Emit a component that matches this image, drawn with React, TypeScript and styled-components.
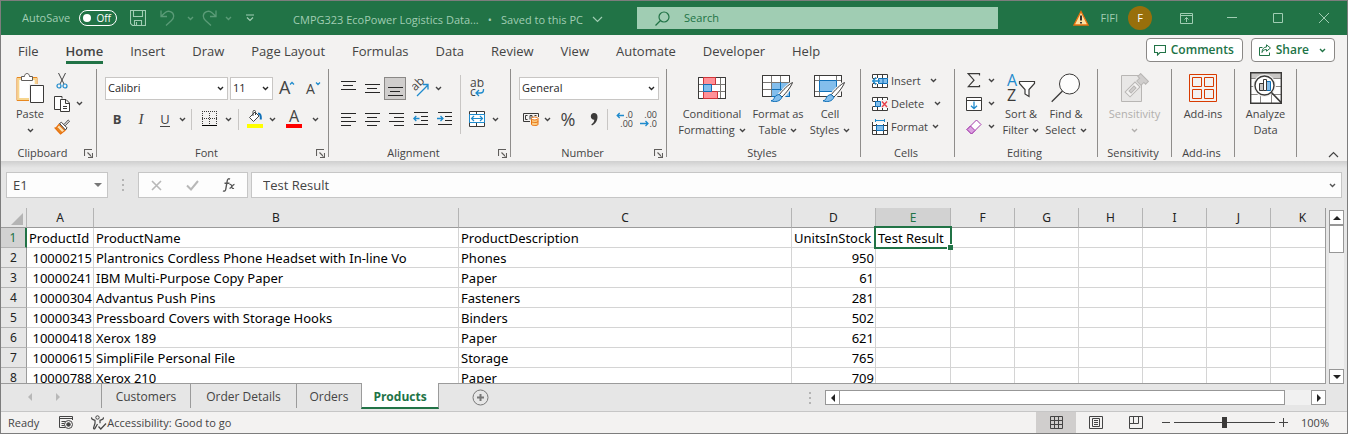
import React, { useState } from "react";
import styled, { createGlobalStyle, css } from "styled-components";

const INK = "#444444";
const DARK = "#3b3a39";
const GREEN = "#217346";
const MINT = "#a0cdb3";
const BLUE = "#1e8bcd";
const ui = `"Open Sans", "Noto Sans", sans-serif`;
const sheetFont = `"Noto Sans", "Open Sans", sans-serif`;

const GlobalStyle = createGlobalStyle`
  * { box-sizing: border-box; }
  body { margin: 0; background: #e6e6e6; }
  button, input, select { font: inherit; color: inherit; margin: 0; }
  button { border: 0; padding: 0; background: none; }
  svg { display: block; flex: none; }
`;

const Window = styled.div`
  display: flex;
  flex-direction: column;
  height: 100vh;
  border: 1px solid #7d7d7d;
  background: #e6e6e6;
  font: 11px/16px ${ui};
  color: ${INK};
  overflow: hidden;
`;

const Spacer = styled.span`
  flex: 1;
`;

/* ---------- title bar ---------- */

const TitleBar = styled.header`
  display: flex;
  align-items: center;
  flex: none;
  height: 34px;
  padding-left: 21px;
  background: ${GREEN};
  color: ${MINT};
`;

const Toggle = styled.button`
  display: flex;
  align-items: center;
  justify-content: space-between;
  width: 38px;
  height: 16px;
  margin: 0 10px 0 9px;
  padding: 0 5px 0 3px;
  border: 1px solid #fff;
  border-radius: 8px;
  color: #fff;
  font-size: 10px;
  line-height: 14px;
`;

const Knob = styled.span`
  width: 8px;
  height: 8px;
  border-radius: 50%;
  background: #fff;
`;

const BarButton = styled.button<{ $w: number; $dim?: boolean }>`
  display: flex;
  align-items: center;
  justify-content: center;
  flex: none;
  width: ${(p) => p.$w}px;
  height: 32px;
  opacity: ${(p) => (p.$dim ? 0.45 : 1)};
`;

const DocTitle = styled.button`
  display: flex;
  align-items: center;
  justify-content: space-between;
  flex: none;
  width: 310px;
  margin-left: 26px;
  padding-top: 3px;
`;

const SearchBox = styled.label`
  display: flex;
  align-items: center;
  flex: 1 1 200px;
  min-width: 120px;
  height: 22px;
  margin: 0 75px 0 34px;
  padding-left: 18px;
  gap: 14px;
  background: ${MINT};
  color: ${GREEN};
`;

const SearchInput = styled.input`
  flex: 1;
  min-width: 0;
  border: 0;
  padding: 0;
  outline: 0;
  background: transparent;
  &::placeholder { color: ${GREEN}; opacity: 1; }
`;

const Account = styled.button`
  display: flex;
  align-items: center;
  flex: none;
  gap: 10px;
  margin: 0 11px 0 12px;
`;

const Avatar = styled.span`
  width: 24px;
  height: 24px;
  border-radius: 50%;
  background: #986f0b;
  color: #fff;
  line-height: 24px;
  text-align: center;
`;

/* ---------- ribbon ---------- */

const TabRow = styled.nav`
  display: flex;
  align-items: center;
  flex: none;
  height: 29px;
  padding: 0 12px 0 17px;
  gap: 27px;
  background: #f3f2f1;
`;

const Tab = styled.button<{ $active?: boolean }>`
  height: 29px;
  padding: 5px 0 0;
  border-bottom: 3px solid ${(p) => (p.$active ? GREEN : "transparent")};
  font-size: 13px;
  font-weight: ${(p) => (p.$active ? 600 : 400)};
  white-space: nowrap;
`;

const TabActions = styled.div`
  display: flex;
  gap: 8px;
  margin-left: auto;
  padding-top: 1px;
`;

const ActionButton = styled.button`
  display: flex;
  align-items: center;
  height: 24px;
  padding: 0 8px 0 7px;
  gap: 5px;
  border: 1px solid #8a8886;
  border-radius: 4px;
  background: #fff;
  color: ${GREEN};
  font-size: 12px;
  font-weight: 600;
`;

const Ribbon = styled.div`
  display: flex;
  flex: none;
  height: 97px;
  background: #f3f2f1;
`;

const Rule = styled.div`
  flex: none;
  width: 1px;
  margin: 5px 0 4px;
  background: #8f8d8b;
`;

const Group = styled.section<{ $w: number }>`
  display: flex;
  flex-direction: column;
  flex: none;
  width: ${(p) => p.$w}px;
`;

const GroupBody = styled.div<{ $left?: number }>`
  display: flex;
  flex: 1;
  padding-left: ${(p) => p.$left ?? 0}px;
`;

const GroupFooter = styled.div`
  display: flex;
  align-items: center;
  height: 16px;
  padding-right: 3px;
`;

const GroupLabel = styled.span`
  flex: 1;
  text-align: center;
`;

const TwoRows = styled.div`
  display: flex;
  flex-direction: column;
  gap: 7px;
  padding-top: 12px;
`;

const ThreeRows = styled.div`
  display: flex;
  flex-direction: column;
  padding-top: 5px;
`;

const Row = styled.div<{ $h?: number; $gap?: number }>`
  display: flex;
  align-items: center;
  height: ${(p) => p.$h ?? 24}px;
  gap: ${(p) => p.$gap ?? 0}px;
`;

const Tool = styled.button<{ $w?: number; $on?: boolean }>`
  display: flex;
  align-items: center;
  justify-content: center;
  flex: none;
  width: ${(p) => p.$w ?? 24}px;
  height: 23px;
  ${(p) =>
    p.$on &&
    css`
      border: 1px solid #8a8886;
      background: #d0cecd;
    `}
`;

const Glyph = styled.span<{ $size?: number; $bold?: boolean; $italic?: boolean; $under?: boolean }>`
  font-size: ${(p) => p.$size ?? 13}px;
  font-weight: ${(p) => (p.$bold ? 700 : 400)};
  font-style: ${(p) => (p.$italic ? "italic" : "normal")};
  font-family: ${(p) => (p.$italic ? `"Liberation Serif", serif` : "inherit")};
  border-bottom: ${(p) => (p.$under ? `1px solid ${INK}` : "0")};
  line-height: 14px;
`;

const Separator = styled.div<{ $h?: number }>`
  flex: none;
  width: 1px;
  height: ${(p) => p.$h ?? 21}px;
  margin: 0 4px;
  background: #c8c6c4;
`;

const LargeTool = styled.button<{ $w: number; $off?: boolean }>`
  display: flex;
  flex-direction: column;
  align-items: center;
  flex: none;
  width: ${(p) => p.$w}px;
  padding-top: 6px;
  color: ${(p) => (p.$off ? "#b1afad" : INK)};
  white-space: nowrap;
`;

const LargeIcon = styled.span`
  display: flex;
  align-items: center;
  height: 36px;
`;

const Caption = styled.span`
  display: flex;
  align-items: center;
  height: 16px;
  gap: 4px;
`;

const LineTool = styled.button`
  display: flex;
  align-items: center;
  height: 23px;
  gap: 3px;
`;

const LineText = styled.span<{ $w: number }>`
  width: ${(p) => p.$w}px;
  text-align: left;
`;

const Combo = styled.span<{ $w: number }>`
  display: grid;
  align-items: center;
  width: ${(p) => p.$w}px;
  height: 23px;
  border: 1px solid #c8c6c4;
  background: #fff;
  color: #262626;
  & > * { grid-area: 1 / 1; }
  & > svg { justify-self: end; margin-right: 3px; pointer-events: none; }
`;

const Select = styled.select`
  appearance: none;
  width: 100%;
  height: 21px;
  padding: 0 14px 0 2px;
  border: 0;
  background: transparent;
`;

const CollapseCell = styled.div`
  display: flex;
  flex: 1;
  align-items: flex-end;
  justify-content: flex-end;
  padding: 0 8px 3px 0;
`;

/* ---------- formula bar ---------- */

const FormulaBar = styled.div`
  display: flex;
  flex: none;
  height: 47px;
  padding: 11px 5px 10px;
  background: linear-gradient(#cfcfcf, #e6e6e6 7px);
  font-size: 13px;
`;

const Field = styled.div<{ $w?: number }>`
  display: flex;
  align-items: center;
  flex: ${(p) => (p.$w ? `0 0 ${p.$w}px` : "1")};
  min-width: 0;
  height: 26px;
  padding: 0 5px;
  border: 1px solid #c6c6c6;
  background: #fdfdfd;
`;

const FieldInput = styled.input<{ $pad: number }>`
  flex: 1;
  min-width: 0;
  padding: 0 0 0 ${(p) => p.$pad}px;
  border: 0;
  outline: 0;
  background: transparent;
`;

const Dots = styled.div`
  display: flex;
  align-items: center;
  justify-content: center;
  width: 30px;
`;

const FxButtons = styled(Field)`
  justify-content: space-between;
  margin-right: 3px;
  padding: 0 11px 0 12px;
`;

/* ---------- sheet ---------- */

const SheetArea = styled.main`
  display: flex;
  flex: 1;
  min-height: 0;
`;

const GridClip = styled.div`
  flex: 1;
  min-width: 0;
  overflow: hidden;
  border-right: 1px solid #9b9b9b;
  border-bottom: 1px solid #9b9b9b;
`;

const Grid = styled.table`
  table-layout: fixed;
  width: 100%;
  border-spacing: 0;
  font: 12px/18px ${sheetFont};
  color: #000;
`;

const ColHead = styled.th<{ $on?: boolean }>`
  height: 20px;
  padding: 0;
  border-right: 1px solid #b4b4b4;
  border-bottom: 1px solid #9b9b9b;
  background: ${(p) => (p.$on ? "#d2d2d2" : "#e6e6e6")};
  color: ${(p) => (p.$on ? GREEN : "#222")};
  font-weight: 400;
`;

const Corner = styled(ColHead)`
  & > svg { margin: 3px 3px 0 auto; }
`;

const RowHead = styled.th<{ $on?: boolean }>`
  height: 20px;
  padding: 1px 0 0;
  border-right: ${(p) => (p.$on ? `2px solid ${GREEN}` : "1px solid #9b9b9b")};
  border-bottom: 1px solid #b4b4b4;
  background: ${(p) => (p.$on ? "#d2d2d2" : "#e6e6e6")};
  color: ${(p) => (p.$on ? GREEN : "#222")};
  font-weight: 400;
`;

const Cell = styled.td<{ $num?: boolean; $on?: boolean }>`
  height: 20px;
  padding: 1px 1px 0 2px;
  border-right: 1px solid #d4d4d4;
  border-bottom: 1px solid #d4d4d4;
  background: #fff;
  font-size: 13px;
  line-height: 18px;
  text-align: ${(p) => (p.$num ? "right" : "left")};
  white-space: nowrap;
  ${(p) =>
    p.$on &&
    css`
      position: relative;
      z-index: 1;
      &::before {
        content: "";
        position: absolute;
        inset: -2px;
        border: 2px solid ${GREEN};
      }
      &::after {
        content: "";
        position: absolute;
        right: -3px;
        bottom: -3px;
        width: 5px;
        height: 5px;
        border: solid #fff;
        border-width: 1px 0 0 1px;
        box-sizing: content-box;
        background: ${GREEN};
      }
    `}
`;

const VScroll = styled.div`
  display: flex;
  flex-direction: column;
  width: 15px;
  margin: 2px 3px 0 3px;
  background: #f1f1f1;
`;

const ScrollButton = styled.button`
  display: flex;
  align-items: center;
  justify-content: center;
  flex: none;
  width: 15px;
  height: 15px;
  border: 1px solid #979797;
  background: #fff;
`;

const VThumb = styled.div`
  height: 28px;
  margin-bottom: auto;
  border: 1px solid #979797;
  background: #fff;
`;

const SheetBar = styled.div`
  display: flex;
  flex: none;
  height: 28px;
  padding-right: 21px;
  border-bottom: 1px solid #c6c6c6;
  font-size: 12px;
`;

const SheetNav = styled.div`
  display: flex;
  align-items: center;
  justify-content: center;
  gap: 20px;
  width: 100px;
  padding: 0 14px 2px 0;
`;

const SheetTab = styled.button<{ $w: number; $active?: boolean }>`
  width: ${(p) => p.$w}px;
  height: 24px;
  padding-top: 2px;
  border-left: 1px solid #9b9b9b;
  ${(p) =>
    p.$active &&
    css`
      margin-top: -1px;
      height: 26px;
      padding-top: 4px;
      border-right: 1px solid #9b9b9b;
      border-bottom: 2px solid ${GREEN};
      background: #fff;
      color: ${GREEN};
      font-weight: 700;
    `}
`;

const AddSheet = styled.button`
  display: flex;
  align-items: center;
  margin-left: 33px;
`;

const HScroll = styled.div`
  display: flex;
  flex: 0 0 501px;
  height: 15px;
  margin-top: 6px;
  background: #f1f1f1;
`;

const HThumb = styled.div`
  flex: 1;
  margin: 0 26px 0 -1px;
  border: 1px solid #979797;
  background: #fff;
`;

/* ---------- status bar ---------- */

const StatusBar = styled.footer`
  display: flex;
  align-items: center;
  flex: none;
  height: 21px;
  padding: 0 17px 0 7px;
  background: #f3f2f1;
`;

const StatusItem = styled.button<{ $left: number }>`
  display: flex;
  align-items: center;
  margin-left: ${(p) => p.$left}px;
`;

const ViewButton = styled.button<{ $on?: boolean }>`
  display: flex;
  align-items: center;
  justify-content: center;
  width: 40px;
  height: 21px;
  background: ${(p) => (p.$on ? "#d0cecd" : "transparent")};
`;

const Zoom = styled.div`
  display: flex;
  align-items: center;
  gap: 4px;
  margin-left: 5px;
`;

const ZoomRange = styled.input`
  appearance: none;
  width: 101px;
  height: 13px;
  background: linear-gradient(${INK}, ${INK}) center / 100% 1px no-repeat;
  &::-webkit-slider-thumb {
    appearance: none;
    width: 5px;
    height: 11px;
    background: ${DARK};
  }
`;

const ZoomValue = styled.button`
  width: 30px;
  margin-left: 8px;
`;

/* ---------- drawings ---------- */

type ArtProps = { w: number; h: number; c?: string; children: React.ReactNode };
const Art = ({ w, h, c = INK, children }: ArtProps) => (
  <svg width={w} height={h} viewBox={`0 0 ${w} ${h}`} fill="none" stroke={c} strokeWidth="1" aria-hidden="true">
    {children}
  </svg>
);

type MarkProps = { x: number; y: number; size: number; c?: string; turn?: string; anchor?: "start" | "end"; children: string };
const Mark = ({ x, y, size, c = INK, turn, anchor = "start", children }: MarkProps) => (
  <text x={x} y={y} fontSize={size} fill={c} stroke="none" transform={turn} textAnchor={anchor} fontFamily={ui}>
    {children}
  </text>
);

const Chevron = ({ c = INK }: { c?: string }) => (
  <Art w={7} h={5} c={c}>
    <path d="M1 1l2.500 2.500L6 1" strokeWidth="1.4" />
  </Art>
);

const ThinChevron = ({ up }: { up?: boolean }) => (
  <Art w={11} h={7} c="currentColor">
    <path d={up ? "M1 6l4.500-4.500L10 6" : "M1 1l4.500 4.500L10 1"} strokeWidth="1.2" />
  </Art>
);

const Launcher = () => (
  <Art w={9} h={9} c="#605e5c">
    <path d="M.5 7V.5H8M3.500 3.500l4 4M8.500 4v4.500H4" strokeWidth="1.1" />
  </Art>
);

const SaveIcon = () => (
  <Art w={16} h={16} c={MINT}>
    <path d="M.5.5h15v15h-13l-2-2zM3.500.5v6h9v-6M4.500 15.500v-5h7v5M6.500 12v3" strokeWidth="1.1" />
  </Art>
);

const UndoIcon = ({ flip }: { flip?: boolean }) => (
  <svg width="15" height="16" viewBox="0 0 15 16" fill="none" stroke={MINT} strokeWidth="1.3" aria-hidden="true">
    <g transform={flip ? "matrix(-1 0 0 1 15 0)" : undefined}>
      <path d="M1 .5v6h6M1.200 6.300L5 2.800C8-.2 13.500 1.500 13.700 6c0 2-1 3.300-2.200 4.400L6 15.500" />
    </g>
  </svg>
);

const alignLines = (rows: [number, number, number][]) => (
  <Art w={15} h={15}>
    {rows.map(([y, a, b]) => (
      <path key={y} d={`M${a} ${y}.5H${b}`} stroke="#262626" shapeRendering="crispEdges" />
    ))}
  </Art>
);

const Brush = () => (
  <g>
    <path d="M31 1c-4 2-11 9-14 13l3 3c4-4 9-11 11-16z" fill="#fff" stroke="#f3f2f1" strokeWidth="3" />
    <path d="M30.500 1.500c-4 2-10 8-13 12l2.500 2.500c4-4 9-10 10.500-14.500z" fill="#fff" stroke="#3b3a39" />
    <path d="M17 13.500c-3 .5-4.500 2-5 4-.4 1.300-1.500 2-3 2.300 4 1.700 9.500.7 11-3.800z" fill="#83beec" stroke="#1070b8" />
  </g>
);

const CondFormatIcon = () => (
  <Art w={28} h={22} c="#3b3a39">
    <path d="M.5.500h27v21H.5z" fill="#fff" />
    <path d="M.5 7.500h27M.5 14.500h27M5.500 0v22M22.500 0v22" stroke="#797774" />
    <path d="M.5.500h27v21H.5z" />
    <path d="M5.500.500h12v7h-12zM5.500 14.500h14v7h-14z" fill="#ff9198" stroke="#d13438" />
    <path d="M5.500 7.500h8v7h-8z" fill="#83beec" stroke="#1070b8" />
  </Art>
);

const FormatTableIcon = () => (
  <Art w={32} h={28} c="#3b3a39">
    <path d="M.5 1.500h27v21H.5z" fill="#fff" />
    <path d="M9.500 8.500h18v14h-18z" fill="#83beec" stroke="#1070b8" />
    <path d="M.5 8.500h27M.5 15.500h9M9.500 1v21M18.500 1v7" stroke="#797774" />
    <path d="M18.500 8v14M9.500 15.500h18" stroke="#1070b8" />
    <path d="M27.500 9V1.500H.5v21h9" />
    <g transform="translate(0 7)"><Brush /></g>
  </Art>
);

const CellStylesIcon = () => (
  <Art w={32} h={28} c="#3b3a39">
    <path d="M.5 1.500h27v21H.5z" fill="#fff" />
    <path d="M.5 6.500h27M.5 17.500h27M5.500 1v21M22.500 1v21" stroke="#797774" />
    <path d="M27.500 9V1.500H.5v21h12" />
    <path d="M5.500 6.500h17v11h-17z" fill="#83beec" stroke="#1070b8" />
    <g transform="translate(0 7)"><Brush /></g>
  </Art>
);

const CellsIcon = ({ kind }: { kind: "insert" | "delete" | "format" }) => (
  <Art w={16} h={16} c="#3b3a39">
    {kind === "format" ? (
      <>
        <path d="M.5 3.500h15v12H.5z" fill="#fff" stroke="none" />
        <path d="M.5 3v12.500h15V3M.5 6.500h15M.5 11.500h15M4.500 5v10M11.500 5v10" />
        <path d="M4.500 6.500h7v5h-7z" fill="#83beec" stroke="#1070b8" />
        <path d="M3.500 1.500h9M3.500 0v3M12.500 0v3" stroke={BLUE} />
      </>
    ) : (
      <>
        <path d="M.5 1.500h15v13H.5z" fill="#fff" stroke="none" />
        <path d="M.5 5V1.500h15V5M.5 11v3.500h15V11M5.500 2v3M10.500 2v3M5.500 11v3M10.500 11v3M.5 5.500h4M.5 10.500h4" />
        {kind === "insert" ? (
          <>
            <path d="M6.500 5.500h9v5h-9zM11 5v6" fill="#83beec" stroke="#1070b8" />
            <path d="M8 8H1M4 4.500L.8 8 4 11.500" stroke={BLUE} strokeWidth="1.4" />
          </>
        ) : (
          <>
            <path d="M3.500 5.500h5v5h-5z" fill="#83beec" stroke="#1070b8" />
            <path d="M9 4h7v8H9z" fill="#f3f2f1" stroke="none" />
            <path d="M10 5.500l5 5.500M15 5.500L10 11" stroke="#e8404a" strokeWidth="1.4" />
          </>
        )}
      </>
    )}
  </Art>
);

const PasteIcon = () => (
  <Art w={28} h={30} c="#3b3a39">
    <path d="M1 4.500h20v23H1z" fill="#fff" stroke="#e8871e" />
    <path d="M2.500 6h17v20h-17z" fill="#fdf3e0" stroke="#f7d58e" strokeWidth="2" />
    <path d="M3.500 7h15v18h-15z" fill="#fff" stroke="none" />
    <path d="M5.500 7.500v-4h3c0-4 5-4 5 0h3v4z" fill="#fff" stroke="#605e5c" />
    <path d="M13 11h14v19H13z" fill="#f3f2f1" stroke="none" />
    <path d="M14.500 12.500h13v17h-13z" fill="#fff" />
  </Art>
);

const CutIcon = () => (
  <Art w={12} h={16}>
    <path d="M2.500 0l5.500 11M9.500 0L4 11" />
    <circle cx="3" cy="13" r="2" stroke={BLUE} strokeWidth="1.2" />
    <circle cx="9" cy="13" r="2" stroke={BLUE} strokeWidth="1.2" />
  </Art>
);

const CopyIcon = () => (
  <Art w={16} h={16} c="#3b3a39">
    <path d="M6 13.500H.5V.500h7.500v2" fill="#fff" />
    <path d="M6.500 3.500h5.500l3.500 3.500v8.500h-9zM11.500 3.500v4h4M9 10.500h4M9 12.500h4" fill="#fff" />
  </Art>
);

const PainterIcon = () => (
  <Art w={16} h={16}>
    <path d="M5 5.500L11 11.500 6.500 15 1 9 2.500 8.500z" fill="#fbe0b0" stroke="#e8710f" strokeWidth="1.2" />
    <path d="M1.500 9.500L6.500 14.500 8 13.500 3.500 8.800z" fill="#e8871e" stroke="#e8710f" />
    <path d="M5.500 4.500l2-1.200L13 8.800l-1.500 2.200zM10 5.500L14.300 1l1.200 1.200L11 6.800" fill="#fff" stroke="#3b3a39" />
  </Art>
);

const BordersIcon = () => (
  <Art w={15} h={16} c="#3b3a39">
    <path d="M0 .500h15M0 7.500h15M.5 2v12M7.500 2v12M14.500 2v12" strokeDasharray="1 1" shapeRendering="crispEdges" />
    <path d="M0 14.500h15" stroke="#000" shapeRendering="crispEdges" />
  </Art>
);

const FillIcon = () => (
  <Art w={16} h={18}>
    <path d="M2.500 7.500L8 2l4 4-5.500 5.500zM6 6V1.500C6 0 8.500 0 8.500 1.500V5" fill="#fff" />
    <path d="M11 3.500c2.500 0 3 2.500 2.800 6" stroke="#1070b8" strokeWidth="2" />
    <path d="M0 14h16v4H0z" fill="#ffff00" stroke="none" />
  </Art>
);

const FontColorIcon = () => (
  <Art w={16} h={18}>
    <Mark x={3} y={12} size={16}>A</Mark>
    <path d="M0 14h16v4H0z" fill="#ff0000" stroke="none" />
  </Art>
);

const SizeIcon = ({ grow }: { grow?: boolean }) => (
  <Art w={18} h={16}>
    {grow ? <Mark x={1} y={14} size={18}>A</Mark> : <Mark x={2} y={14} size={14}>A</Mark>}
    <path d={grow ? "M12 4.500l2-2 2 2" : "M12 2.500l2 2 2-2"} stroke={BLUE} strokeWidth="1.3" />
  </Art>
);

const OrientIcon = () => (
  <Art w={17} h={18}>
    <Mark x={1} y={11} size={12} turn="rotate(-45 4 9) ">ab</Mark>
    <path d="M5 17L15.500 6.500M11 5.500h5v5" stroke={BLUE} strokeWidth="1.3" />
  </Art>
);

const WrapIcon = () => (
  <Art w={16} h={18}>
    <Mark x={1} y={8} size={12}>ab</Mark>
    <Mark x={1} y={17} size={12}>c</Mark>
    <path d="M14.500 10v1c0 2-1 3-3 3H7.500M10 11l-3 3 3 3" stroke={BLUE} strokeWidth="1.3" />
  </Art>
);

const IndentIcon = ({ right }: { right?: boolean }) => (
  <Art w={15} h={14}>
    <path d="M1 .500h14M8 4.500h7M8 8.500h7M1 12.500h14" stroke="#262626" shapeRendering="crispEdges" />
    <path d={right ? "M0 6.500h6M3.500 4l2.500 2.500L3.500 9" : "M6.500 6.500H.8M3.300 4L.8 6.500 3.300 9"} stroke={BLUE} strokeWidth="1.3" />
  </Art>
);

const MergeIcon = () => (
  <Art w={16} h={16} c="#3b3a39">
    <path d="M.5.500h15v15H.5zM7.500 0v4M7.500 12v4" fill="#fff" />
    <path d="M.5 3.500h15v8H.5z" fill="#fff" stroke={BLUE} />
    <path d="M2.500 7.500h11M5 5L2.500 7.500 5 10M11 5l2.500 2.500L11 10" stroke={BLUE} strokeWidth="1.2" />
  </Art>
);

const CurrencyIcon = () => (
  <Art w={16} h={14} c="#3b3a39">
    <path d="M7 9.500H.5v-8h15V5" />
    <path d="M4.500 3.500h-2v4h2M7 7.500v-4h2v4M11.500 3.500h2" />
    <path d="M8.500 6.500v6c0 1.300 6.500 1.300 6.500 0v-6" fill="#fbd08a" stroke="#e8710f" />
    <ellipse cx="11.700" cy="6.500" rx="3.200" ry="1.500" fill="#fff" stroke="#e8710f" />
    <path d="M8.500 9.500c0 1.300 6.500 1.300 6.500 0" stroke="#e8710f" />
  </Art>
);

const DecimalIcon = ({ less }: { less?: boolean }) => (
  <Art w={17} h={17}>
    <Mark x={17} y={7} size={9} anchor="end">{less ? ".00" : ".0"}</Mark>
    <Mark x={17} y={16} size={9} anchor="end">{less ? ".0" : ".00"}</Mark>
    <path d={less ? "M0 12.500h8M5.500 10L8 12.500 5.500 15" : "M8 4.500H1.200M3.700 2L1.200 4.500 3.700 7"} stroke={BLUE} strokeWidth="1.3" />
  </Art>
);

const SumIcon = () => (
  <Art w={14} h={15} c="#3b3a39">
    <path d="M12.500 2.500V.7H1.200L7 7.200l-5.800 6.500h11.300V12" strokeWidth="1.2" />
  </Art>
);

const FillDownIcon = () => (
  <Art w={16} h={14} c="#3b3a39">
    <path d="M.5.500h15v13H.5zM.5 3.500h15" fill="#fff" />
    <path d="M8 4.500v7M5 8.700l3 3 3-3" stroke={BLUE} strokeWidth="1.3" />
  </Art>
);

const EraserIcon = () => (
  <Art w={16} h={16} c="#a33bac">
    <path d="M1 10.500L10.500 1 15 5.500 5.500 15z" fill="#fff" />
    <path d="M1 10.500L4.500 7 9 11.500 5.500 15z" fill="#dba0e0" />
  </Art>
);

const SortIcon = () => (
  <Art w={30} h={30} c="#3b3a39">
    <Mark x={1} y={13} size={16} c={BLUE}>A</Mark>
    <Mark x={1} y={28} size={16} c={DARK}>Z</Mark>
    <path d="M13.500 8.500h15v2l-5.500 6v7l-4-2.500v-4.500l-5.500-6z" fill="#fff" strokeWidth="1.2" />
  </Art>
);

const FindIcon = () => (
  <Art w={30} h={30} c="#3b3a39">
    <circle cx="18.500" cy="11" r="10" fill="#fdfdfd" />
    <path d="M11.500 18L.7 28.800" strokeWidth="1.3" />
  </Art>
);

const SensitivityIcon = () => (
  <Art w={28} h={30} c="#b8b6b4">
    <path d="M.5 2.500h20v26H.5z" fill="#e8e7e6" />
    <g transform="rotate(-45 14 14)">
      <rect x="3.500" y="10.500" width="14" height="7" fill="#f3f2f1" />
      <path d="M7 12.500h7v3H7z" fill="#d0cecd" />
      <path d="M19.500 11h4V8.500h4v11h-4V17h-4z" fill="#d0cecd" />
    </g>
  </Art>
);

const AddinsIcon = () => (
  <Art w={28} h={28} c="#d83b01">
    <path d="M.5.500h27v27H.5zM3.500 3.500h9v9h-9zM15.500 3.500h9v9h-9zM3.500 15.500h9v9h-9zM15.500 15.500h9v9h-9z" />
  </Art>
);

const AnalyzeIcon = () => (
  <Art w={32} h={32} c="#3b3a39">
    <path d="M.5.500h31v31H.5z" fill="#fff" />
    <path d="M1 1h30v5H1z" fill="#c8c6c4" stroke="none" />
    <path d="M1 6.500h30M1 14.500h30M1 22.500h30M10.500 22v9M21.500 22v9" stroke="#8a8886" />
    <path d="M.7.700h30.600v30.600H.7z" strokeWidth="1.4" />
    <circle cx="14.500" cy="13.500" r="11" fill="#f3f2f1" stroke="#f3f2f1" />
    <circle cx="14.500" cy="13.500" r="9.500" fill="#fff" strokeWidth="1.400" />
    <path d="M21.500 20.500l10 10.500" strokeWidth="1.600" />
    <path d="M9.500 11.500h4v7h-4z" fill="#c8c6c4" />
    <path d="M16.500 9.500h4v9h-4z" fill="#83beec" stroke="#1070b8" />
    <path d="M13.500 7.500h3v11h-3z" fill="#fff" />
  </Art>
);

const Triangle = ({ dir, c = "#222" }: { dir: "up" | "down" | "left" | "right"; c?: string }) => {
  const d = { up: "M0 6l4-4 4 4z", down: "M0 2l4 4 4-4z", left: "M6 0L2 4l4 4z", right: "M2 0l4 4-4 4z" }[dir];
  return (
    <Art w={8} h={8} c="none">
      <path d={d} fill={c} />
    </Art>
  );
};

const DotColumn = () => (
  <Art w={2} h={12} c="none">
    <path d="M0 0h2v2H0zM0 5h2v2H0zM0 10h2v2H0z" fill="#b4b4b4" />
  </Art>
);

/* ---------- data ---------- */

const tabs = ["File", "Home", "Insert", "Draw", "Page Layout", "Formulas", "Data", "Review", "View", "Automate", "Developer", "Help"];
const columns: [string, number][] = [
  ["A", 67], ["B", 365], ["C", 333], ["D", 84], ["E", 75],
  ["F", 64], ["G", 64], ["H", 64], ["I", 64], ["J", 64], ["K", 64],
];
const rows = [
  ["ProductId", "ProductName", "ProductDescription", "UnitsInStock", "Test Result"],
  ["10000215", "Plantronics Cordless Phone Headset with In-line Vo", "Phones", "950"],
  ["10000241", "IBM Multi-Purpose Copy Paper", "Paper", "61"],
  ["10000304", "Advantus Push Pins", "Fasteners", "281"],
  ["10000343", "Pressboard Covers with Storage Hooks", "Binders", "502"],
  ["10000418", "Xerox 189", "Paper", "621"],
  ["10000615", "SimpliFile Personal File", "Storage", "765"],
  ["10000788", "Xerox 210", "Paper", "709"],
];

const Footer = ({ label, launch }: { label: string; launch?: boolean }) => (
  <GroupFooter>
    <GroupLabel>{label}</GroupLabel>
    {launch && (
      <button aria-label={`${label} settings`}>
        <Launcher />
      </button>
    )}
  </GroupFooter>
);

const Drop = ({ label, w = 10 }: { label: string; w?: number }) => (
  <Tool $w={w} aria-label={label}>
    <Chevron />
  </Tool>
);

export default function App() {
  const [zoom, setZoom] = useState(50);
  return (
    <>
      <GlobalStyle />
      <Window>
        <TitleBar>
          <span>AutoSave</span>
          <Toggle role="switch" aria-checked={false} aria-label="AutoSave">
            <Knob />
            Off
          </Toggle>
          <BarButton $w={22} aria-label="Save"><SaveIcon /></BarButton>
          <BarButton $w={36} $dim aria-label="Undo"><UndoIcon /></BarButton>
          <BarButton $w={10} $dim aria-label="Undo list"><Chevron c={MINT} /></BarButton>
          <BarButton $w={28} $dim aria-label="Redo"><UndoIcon flip /></BarButton>
          <BarButton $w={10} $dim aria-label="Redo list"><Chevron c={MINT} /></BarButton>
          <BarButton $w={34} aria-label="Customize toolbar">
            <Art w={8} h={8} c={MINT}><path d="M0 1h8M1 3.500l3 3 3-3" strokeWidth="1.2" /></Art>
          </BarButton>
          <DocTitle>
            <span>CMPG323 EcoPower Logistics Data...</span>
            <span>•</span>
            <span>Saved to this PC</span>
            <ThinChevron />
          </DocTitle>
          <SearchBox>
            <Art w={15} h={15} c={GREEN}>
              <circle cx="9" cy="6" r="5" strokeWidth="1.2" />
              <path d="M5.500 9.500L.5 14.500" strokeWidth="1.2" />
            </Art>
            <SearchInput placeholder="Search" aria-label="Search" />
          </SearchBox>
          <Art w={16} h={16} c="#e8710f">
            <path d="M8 1.500L15 15H1z" fill="#fde1a0" strokeWidth="1.3" />
            <path d="M8 5.500v5M8 12v1.500" stroke="#222" strokeWidth="1.800" />
          </Art>
          <Account>
            FIFI
            <Avatar>F</Avatar>
          </Account>
          <BarButton $w={46} aria-label="Ribbon display options">
            <Art w={13} h={11} c={MINT}>
              <path d="M.5.500h12v10H.5zM.5 2.500h12M6.500 9V4.500M4.500 6.500l2-2 2 2" />
            </Art>
          </BarButton>
          <BarButton $w={46} aria-label="Minimize"><Art w={10} h={10} c={MINT}><path d="M0 4.500h10" /></Art></BarButton>
          <BarButton $w={46} aria-label="Maximize"><Art w={10} h={10} c={MINT}><path d="M.5.500h9v9h-9z" /></Art></BarButton>
          <BarButton $w={46} aria-label="Close"><Art w={10} h={10} c={MINT}><path d="M0 0l10 10M10 0L0 10" /></Art></BarButton>
        </TitleBar>

        <TabRow>
          {tabs.map((t) => (
            <Tab key={t} $active={t === "Home"}>{t}</Tab>
          ))}
          <TabActions>
            <ActionButton>
              <Art w={12} h={11} c={GREEN}><path d="M.5.500h11v7H6l-2.500 2.500V7.500h-3z" strokeWidth="1.1" /></Art>
              Comments
            </ActionButton>
            <ActionButton>
              <Art w={12} h={12} c={GREEN}>
                <path d="M3.500 3.500h-3v8h10V8.500M7.500.8l4 3.200-4 3.200V5.500C5 5.500 4 6.500 3 8.500c0-3.500 2-5.500 4.500-5.500z" />
              </Art>
              Share
              <span />
              <Chevron c={GREEN} />
            </ActionButton>
          </TabActions>
        </TabRow>

        <Ribbon>
          <Group $w={95}>
            <GroupBody $left={9}>
              <LargeTool $w={40}>
                <LargeIcon><PasteIcon /></LargeIcon>
                <Caption>Paste</Caption>
                <Caption><Chevron /></Caption>
              </LargeTool>
              <ThreeRows>
                <Row $h={23}><Tool aria-label="Cut"><CutIcon /></Tool></Row>
                <Row $h={23}><Tool aria-label="Copy"><CopyIcon /></Tool><Drop label="Copy options" /></Row>
                <Row $h={23}><Tool aria-label="Format painter"><PainterIcon /></Tool></Row>
              </ThreeRows>
            </GroupBody>
            <Footer label="Clipboard" launch />
          </Group>
          <Rule />

          <Group $w={231}>
            <GroupBody $left={8}>
              <TwoRows>
                <Row $gap={2}>
                  <Combo $w={123}>
                    <Select aria-label="Font"><option>Calibri</option></Select>
                    <Chevron c="#262626" />
                  </Combo>
                  <Combo $w={43}>
                    <Select aria-label="Font size"><option>11</option></Select>
                    <Chevron c="#262626" />
                  </Combo>
                  <Tool aria-label="Increase font size"><SizeIcon grow /></Tool>
                  <Tool aria-label="Decrease font size"><SizeIcon /></Tool>
                </Row>
                <Row>
                  <Tool aria-label="Bold"><Glyph $bold>B</Glyph></Tool>
                  <Tool aria-label="Italic"><Glyph $italic $size={15}>I</Glyph></Tool>
                  <Tool aria-label="Underline"><Glyph $under>U</Glyph></Tool>
                  <Drop label="Underline style" />
                  <Separator />
                  <Tool $w={26} aria-label="Borders"><BordersIcon /></Tool>
                  <Drop label="Border style" w={12} />
                  <Separator />
                  <Tool aria-label="Fill color"><FillIcon /></Tool>
                  <Drop label="Fill colors" />
                  <Tool $w={34} aria-label="Font color"><FontColorIcon /></Tool>
                  <Drop label="Font colors" w={8} />
                </Row>
              </TwoRows>
            </GroupBody>
            <Footer label="Font" launch />
          </Group>
          <Rule />

          <Group $w={181}>
            <GroupBody $left={7}>
              <TwoRows>
                <Row>
                  <Tool aria-label="Top align">{alignLines([[0, 0, 15], [4, 2, 12], [8, 0, 15]])}</Tool>
                  <Tool aria-label="Middle align">{alignLines([[3, 0, 15], [7, 2, 12], [11, 0, 15]])}</Tool>
                  <Tool $w={22} $on aria-label="Bottom align">{alignLines([[6, 0, 15], [10, 2, 12], [14, 0, 15]])}</Tool>
                  <Tool $w={28} aria-label="Orientation"><OrientIcon /></Tool>
                  <Drop label="Orientation options" w={8} />
                </Row>
                <Row>
                  <Tool aria-label="Align left">{alignLines([[1, 0, 15], [5, 0, 10], [9, 0, 15], [13, 0, 10]])}</Tool>
                  <Tool aria-label="Center">{alignLines([[1, 0, 15], [5, 2, 12], [9, 0, 15], [13, 2, 12]])}</Tool>
                  <Tool aria-label="Align right">{alignLines([[1, 0, 15], [5, 5, 15], [9, 0, 15], [13, 5, 15]])}</Tool>
                  <Tool aria-label="Decrease indent"><IndentIcon /></Tool>
                  <Tool aria-label="Increase indent"><IndentIcon right /></Tool>
                </Row>
              </TwoRows>
              <Row $h={80}><Separator $h={59} /></Row>
              <TwoRows>
                <Row><Tool aria-label="Wrap text"><WrapIcon /></Tool></Row>
                <Row><Tool aria-label="Merge and center"><MergeIcon /></Tool><Drop label="Merge options" w={12} /></Row>
              </TwoRows>
            </GroupBody>
            <Footer label="Alignment" launch />
          </Group>
          <Rule />

          <Group $w={155}>
            <GroupBody $left={8}>
              <TwoRows>
                <Row>
                  <Combo $w={140}>
                    <Select aria-label="Number format"><option>General</option></Select>
                    <Chevron c="#262626" />
                  </Combo>
                </Row>
                <Row>
                  <Tool aria-label="Accounting format"><CurrencyIcon /></Tool>
                  <Drop label="Accounting formats" w={8} />
                  <Tool $w={34} aria-label="Percent"><Glyph $size={18}>%</Glyph></Tool>
                  <Tool $w={18} aria-label="Comma">
                    <Art w={8} h={14} c="none">
                      <path d="M4 1c2.200 0 3.500 1.500 3.500 4C7.500 8.500 5.500 12 2 13.500L1.300 12.500C3.500 11 4.200 9.500 4.300 7.800 2.500 8 .8 6.500.8 4.500.8 2.500 2.200 1 4 1z" fill="#3b3a39" />
                    </Art>
                  </Tool>
                  <Separator />
                  <Tool aria-label="Increase decimal"><DecimalIcon /></Tool>
                  <Tool aria-label="Decrease decimal"><DecimalIcon less /></Tool>
                </Row>
              </TwoRows>
            </GroupBody>
            <Footer label="Number" launch />
          </Group>
          <Rule />

          <Group $w={193}>
            <GroupBody $left={8}>
              <LargeTool $w={74}>
                <LargeIcon><CondFormatIcon /></LargeIcon>
                <Caption>Conditional</Caption>
                <Caption>Formatting<Chevron /></Caption>
              </LargeTool>
              <LargeTool $w={58}>
                <LargeIcon><FormatTableIcon /></LargeIcon>
                <Caption>Format as</Caption>
                <Caption>Table<Chevron /></Caption>
              </LargeTool>
              <LargeTool $w={46}>
                <LargeIcon><CellStylesIcon /></LargeIcon>
                <Caption>Cell</Caption>
                <Caption>Styles<Chevron /></Caption>
              </LargeTool>
            </GroupBody>
            <Footer label="Styles" />
          </Group>
          <Rule />

          <Group $w={93}>
            <GroupBody $left={11}>
              <ThreeRows>
                <LineTool><CellsIcon kind="insert" /><LineText $w={36}>Insert</LineText><Chevron /></LineTool>
                <LineTool><CellsIcon kind="delete" /><LineText $w={40}>Delete</LineText><Chevron /></LineTool>
                <LineTool><CellsIcon kind="format" /><LineText $w={38}>Format</LineText><Chevron /></LineTool>
              </ThreeRows>
            </GroupBody>
            <Footer label="Cells" />
          </Group>
          <Rule />

          <Group $w={142}>
            <GroupBody $left={7}>
              <ThreeRows>
                <Row $h={23}><Tool aria-label="AutoSum"><SumIcon /></Tool><Drop label="AutoSum options" /></Row>
                <Row $h={23}><Tool aria-label="Fill"><FillDownIcon /></Tool><Drop label="Fill options" /></Row>
                <Row $h={23}><Tool aria-label="Clear"><EraserIcon /></Tool><Drop label="Clear options" /></Row>
              </ThreeRows>
              <LargeTool $w={50}>
                <LargeIcon><SortIcon /></LargeIcon>
                <Caption>Sort &amp;</Caption>
                <Caption>Filter<Chevron /></Caption>
              </LargeTool>
              <LargeTool $w={40}>
                <LargeIcon><FindIcon /></LargeIcon>
                <Caption>Find &amp;</Caption>
                <Caption>Select<Chevron /></Caption>
              </LargeTool>
            </GroupBody>
            <Footer label="Editing" />
          </Group>
          <Rule />

          <Group $w={73}>
            <GroupBody>
              <LargeTool $w={73} $off disabled>
                <LargeIcon><SensitivityIcon /></LargeIcon>
                <Caption>Sensitivity</Caption>
                <Caption><Chevron c="#b1afad" /></Caption>
              </LargeTool>
            </GroupBody>
            <Footer label="Sensitivity" />
          </Group>
          <Rule />

          <Group $w={62}>
            <GroupBody>
              <LargeTool $w={62}>
                <LargeIcon><AddinsIcon /></LargeIcon>
                <Caption>Add-ins</Caption>
              </LargeTool>
            </GroupBody>
            <Footer label="Add-ins" />
          </Group>
          <Rule />

          <Group $w={61}>
            <GroupBody>
              <LargeTool $w={61}>
                <LargeIcon><AnalyzeIcon /></LargeIcon>
                <Caption>Analyze</Caption>
                <Caption>Data</Caption>
              </LargeTool>
            </GroupBody>
          </Group>
          <Rule />
          <CollapseCell>
            <button aria-label="Collapse ribbon"><ThinChevron up /></button>
          </CollapseCell>
        </Ribbon>

        <FormulaBar>
          <Field $w={102}>
            <FieldInput $pad={1} aria-label="Name box" defaultValue="E1" />
            <Triangle dir="down" c="#777" />
          </Field>
          <Dots><DotColumn /></Dots>
          <FxButtons $w={110}>
            <button aria-label="Cancel">
              <Art w={11} h={11} c="#b8b8b8"><path d="M1 1l9 9M10 1l-9 9" strokeWidth="1.6" /></Art>
            </button>
            <button aria-label="Enter">
              <Art w={13} h={11} c="#b8b8b8"><path d="M1 5.500l4 4L12 1" strokeWidth="2" /></Art>
            </button>
            <button aria-label="Insert function">
              <Art w={14} h={14} c="#555">
                <path d="M8 1.200C6.500.3 5.500 1 5.200 3L3.800 11c-.3 2-1.300 2.500-2.800 1.800M2.500 5.200h5" strokeWidth="1.400" />
                <path d="M7.500 6.500c1.500-.5 1.800 0 2.200 2s.8 2.300 2.300 1.700M12.500 6.300c-2 0-3 4-5 4" strokeWidth="1.200" />
              </Art>
            </button>
          </FxButtons>
          <Field>
            <FieldInput $pad={6} aria-label="Formula" defaultValue="Test Result" />
            <Chevron c="#555" />
          </Field>
        </FormulaBar>

        <SheetArea>
          <GridClip>
            <Grid>
              <colgroup>
                <col style={{ width: 26 }} />
                {columns.map(([name, w]) => <col key={name} style={{ width: w }} />)}
                <col />
              </colgroup>
              <thead>
                <tr>
                  <Corner aria-label="Select all">
                    <Art w={12} h={12} c="none"><path d="M12 0v12H0z" fill="#b4b4b4" /></Art>
                  </Corner>
                  {columns.map(([name]) => (
                    <ColHead key={name} scope="col" $on={name === "E"}>{name}</ColHead>
                  ))}
                  <ColHead />
                </tr>
              </thead>
              <tbody>
                {rows.map((r, i) => (
                  <tr key={r[0]}>
                    <RowHead scope="row" $on={i === 0}>{i + 1}</RowHead>
                    {columns.map(([name], c) => (
                      <Cell key={name} $num={i > 0 && (c === 0 || c === 3)} $on={i === 0 && c === 4}>
                        {r[c]}
                      </Cell>
                    ))}
                    <Cell />
                  </tr>
                ))}
              </tbody>
            </Grid>
          </GridClip>
          <VScroll>
            <ScrollButton aria-label="Scroll up"><Triangle dir="up" /></ScrollButton>
            <VThumb />
            <ScrollButton aria-label="Scroll down"><Triangle dir="down" /></ScrollButton>
          </VScroll>
        </SheetArea>

        <SheetBar>
          <SheetNav>
            <Triangle dir="left" c="#b8b8b8" />
            <Triangle dir="right" c="#b8b8b8" />
          </SheetNav>
          <SheetTab $w={89}>Customers</SheetTab>
          <SheetTab $w={106}>Order Details</SheetTab>
          <SheetTab $w={65}>Orders</SheetTab>
          <SheetTab $w={78} $active>Products</SheetTab>
          <AddSheet aria-label="New sheet">
            <Art w={17} h={17} c="#777">
              <circle cx="8.500" cy="8.500" r="7.500" />
              <path d="M8.500 5v7M5 8.500h7" strokeWidth="2" />
            </Art>
          </AddSheet>
          <Spacer />
          <Dots><DotColumn /></Dots>
          <HScroll>
            <ScrollButton aria-label="Scroll left"><Triangle dir="left" /></ScrollButton>
            <HThumb />
            <ScrollButton aria-label="Scroll right"><Triangle dir="right" /></ScrollButton>
          </HScroll>
        </SheetBar>

        <StatusBar>
          <span>Ready</span>
          <StatusItem $left={20} aria-label="Record macro">
            <Art w={15} h={13}>
              <path d="M6 11.500H.5V.500h13V4M.5 2.500h13M2.500 5.500h4M2.500 7.500h3M2.500 9.500h3" />
              <circle cx="9.500" cy="8.500" r="4" fill="#f3f2f1" />
              <circle cx="9.500" cy="8.500" r="1.800" fill={INK} />
            </Art>
          </StatusItem>
          <StatusItem $left={17}>
            <Art w={16} h={15}>
              <circle cx="6.500" cy="2.500" r="1.700" />
              <path d="M1 2.500c-1 1 0 2 3 2.800v3L2.500 13c0 1 1 1.300 1.500.4L6.500 9M12 2.500c1 1 0 2-3 2.800v3M7.500 11.500l2.300 2.500L15 8.500" strokeWidth="1.200" />
            </Art>
            Accessibility: Good to go
          </StatusItem>
          <Spacer />
          <ViewButton $on aria-label="Normal view">
            <Art w={13} h={13}><path d="M.5.500h12v12H.5zM.5 4.500h12M.5 8.500h12M4.500.500v12M8.500.500v12" /></Art>
          </ViewButton>
          <ViewButton aria-label="Page layout view">
            <Art w={14} h={13}><path d="M.5.500h13v12H.5zM3.500 2.500h7v8h-7zM5 4.500h4M5 6.500h4M5 8.500h4" /></Art>
          </ViewButton>
          <ViewButton aria-label="Page break view">
            <Art w={14} h={13}><path d="M.5.500h13v12H.5zM.5 7.500h9V.500M4.500.500v7" /></Art>
          </ViewButton>
          <Zoom>
            <button aria-label="Zoom out"><Art w={9} h={9}><path d="M1 4.500h8" /></Art></button>
            <ZoomRange type="range" aria-label="Zoom" value={zoom} onChange={(e) => setZoom(Number(e.target.value))} />
            <button aria-label="Zoom in"><Art w={9} h={9}><path d="M0 4.500h9M4.500 0v9" /></Art></button>
            <ZoomValue>100%</ZoomValue>
          </Zoom>
        </StatusBar>
      </Window>
    </>
  );
}
